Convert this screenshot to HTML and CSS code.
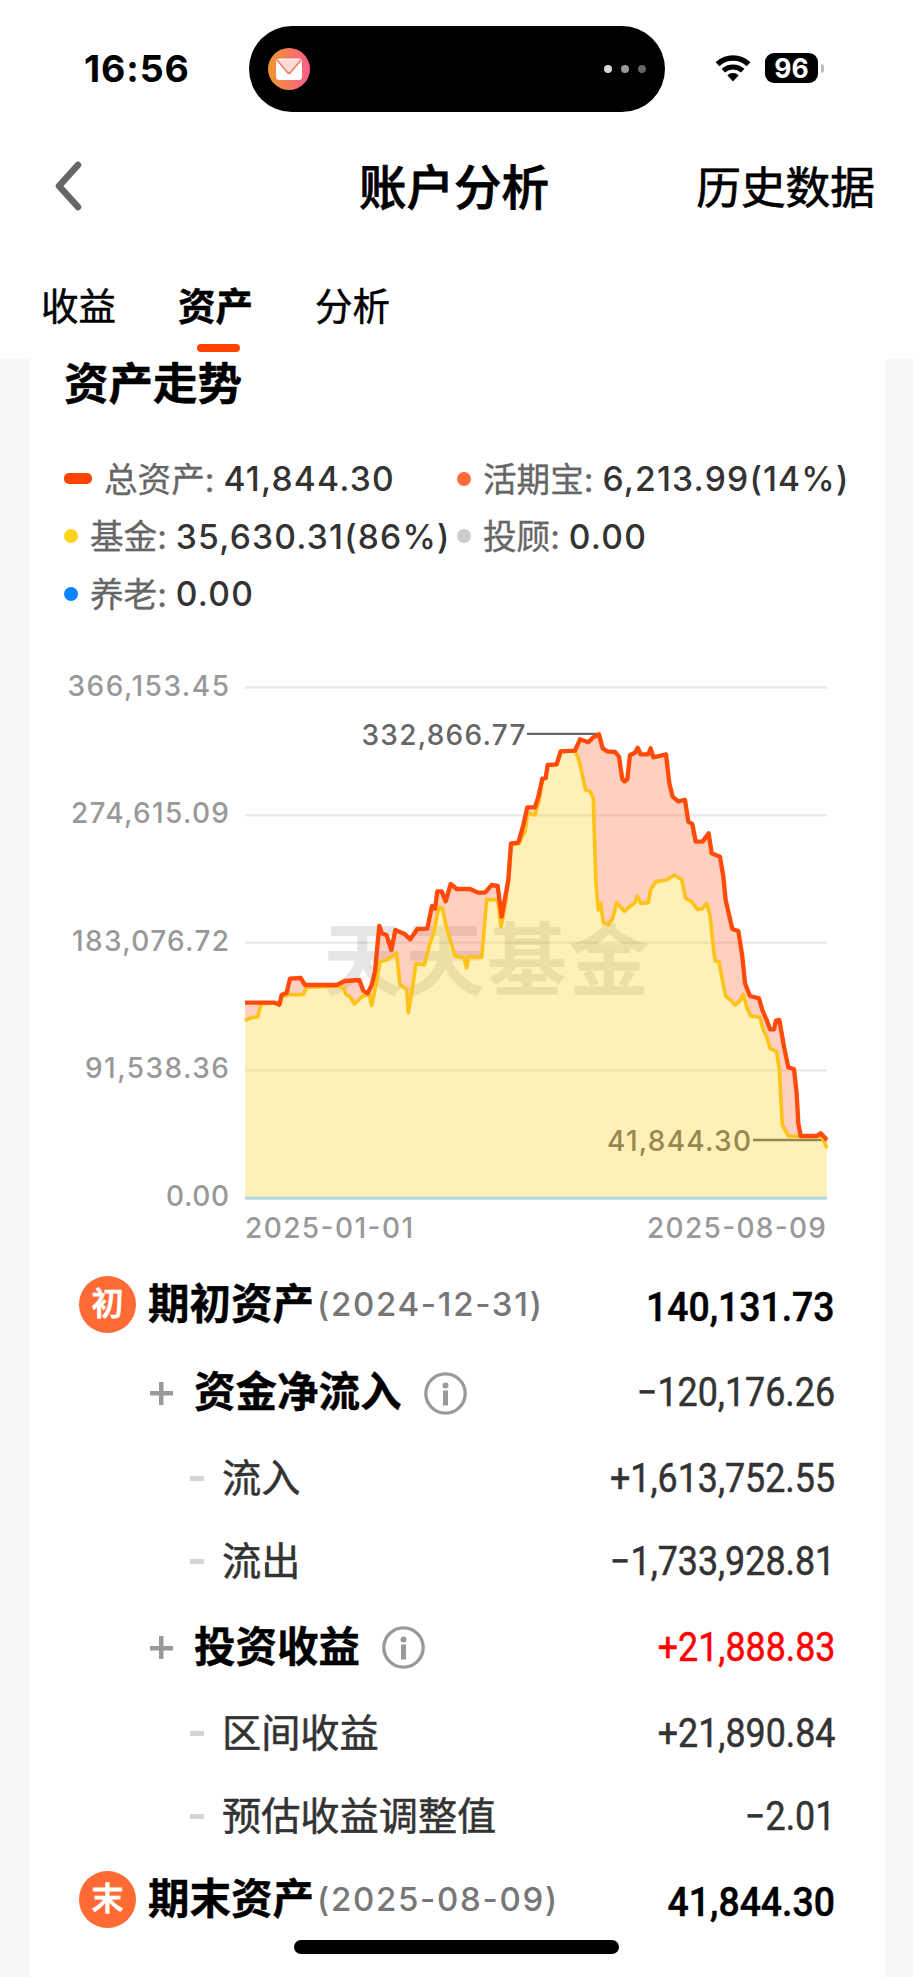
FILE: index.html
```html
<!DOCTYPE html>
<html lang="zh-CN">
<head>
<meta charset="utf-8">
<title>账户分析</title>
<link rel="stylesheet" href="styles.css">
</head>
<body>
<div class="screen">
  <header class="status">
    <span class="time">16:56</span>
    <div class="island">
      <svg class="mail" viewBox="0 0 42 42">
        <defs><linearGradient id="mailbg" x1="0" y1="0" x2="1" y2="0"><stop offset="0" stop-color="#f0962f"/><stop offset="1" stop-color="#fb5c8e"/></linearGradient></defs>
        <circle cx="21" cy="21" r="21" fill="url(#mailbg)"/>
        <rect x="8" y="10.500" width="26" height="21.500" rx="3.500" fill="#fff"/>
        <path d="M9.500 11.500H32.500L21 25Z" fill="#ffdcd8"/>
        <path d="M9 12L19.500 24.500Q21 26 22.500 24.500L33 12" fill="none" stroke="#f5806a" stroke-width="1.800"/>
      </svg>
      <div class="dots"><i></i><i></i><i></i></div>
    </div>
    <svg class="wifi" viewBox="0 0 36 28">
      <path d="M2.500 10.200A22.500 22.500 0 0 1 33.500 10.200" fill="none" stroke="#000" stroke-width="5.400"/>
      <path d="M8.300 16.700A14.500 14.500 0 0 1 27.700 16.700" fill="none" stroke="#000" stroke-width="5"/>
      <path d="M12.300 21.300A8.500 8.500 0 0 1 23.700 21.300L18 27.500Z"/>
    </svg>
    <div class="battery">96</div><i class="nub"></i>
  </header>

  <nav class="nav">
    <svg class="back" viewBox="0 0 28 50"><path d="M24 4L5 25L24 46" fill="none" stroke="#666" stroke-width="6.500" stroke-linecap="round" stroke-linejoin="round"/></svg>
    <h1 class="page-title">账户分析</h1>
    <a class="history">历史数据</a>
  </nav>

  <div class="tabs">
    <span class="tab">收益</span>
    <span class="tab active">资产</span>
    <span class="tab">分析</span>
  </div>

  <main class="backdrop">
    <section class="card">
      <h2 class="card-title">资产走势</h2>
      <div class="legend">
        <div class="key"><i class="mark bar"></i><span class="name">总资产:</span><b class="num">41,844.30</b></div>
        <div class="key"><i class="mark coral"></i><span class="name">活期宝:</span><b class="num">6,213.99(14%)</b></div>
        <div class="key"><i class="mark yellow"></i><span class="name">基金:</span><b class="num">35,630.31(86%)</b></div>
        <div class="key"><i class="mark gray"></i><span class="name">投顾:</span><b class="num">0.00</b></div>
        <div class="key"><i class="mark blue"></i><span class="name">养老:</span><b class="num">0.00</b></div>
      </div>

      <svg class="chart" viewBox="30 641 855 620">
        <g class="grid">
          <path d="M245 687.500H827" stroke-width="1.500"/><path d="M245 815.300H827"/><path d="M245 942.700H827"/><path d="M245 1070.300H827" stroke-width="1.500"/>
        </g>
        <g class="axis">
          <text x="67.500" y="695.500" textLength="161.500">366,153.45</text>
          <text x="71" y="823" textLength="158">274,615.09</text>
          <text x="72" y="950.500" textLength="157">183,076.72</text>
          <text x="85" y="1077.500" textLength="144">91,538.36</text>
          <text x="166" y="1206" textLength="63">0.00</text>
          <text x="245" y="1237.500" textLength="168">2025-01-01</text>
          <text x="647" y="1237.500" textLength="179">2025-08-09</text>
        </g>
        <text class="watermark" x="323" y="989" textLength="326">天天基金</text>
        <g class="callout">
          <text x="361.500" y="744.500" textLength="164">332,866.77</text>
          <path d="M527 733.800H597"/>
          <text x="607" y="1150.500" textLength="144">41,844.30</text>
          <path d="M753 1140H827"/>
        </g>
        <g id="series" transform="translate(230 700) scale(.33333)"></g>
        <path d="M245 1198.300H827" stroke="#b3d4e4" stroke-width="3"/>
      </svg>

      <div class="list">
        <div class="row head"><span class="badge">初</span><b class="label">期初资产</b><span class="date">(2024-12-31)</span><span class="amount strong">140,131.73</span></div>
        <div class="row item"><i class="plus"></i><b class="label">资金净流入</b><svg class="info" viewBox="0 0 43 43"><circle cx="21.500" cy="21.500" r="19.700"/><circle class="dot" cx="21.500" cy="13.500" r="3"/><path d="M21.500 18.500V33.500"/></svg><span class="amount">−120,176.26</span></div>
        <div class="row sub"><i class="dash"></i><span class="label">流入</span><span class="amount">+1,613,752.55</span></div>
        <div class="row sub"><i class="dash"></i><span class="label">流出</span><span class="amount">−1,733,928.81</span></div>
        <div class="row item"><i class="plus"></i><b class="label">投资收益</b><svg class="info" viewBox="0 0 43 43"><circle cx="21.500" cy="21.500" r="19.700"/><circle class="dot" cx="21.500" cy="13.500" r="3"/><path d="M21.500 18.500V33.500"/></svg><span class="amount red">+21,888.83</span></div>
        <div class="row sub"><i class="dash"></i><span class="label">区间收益</span><span class="amount">+21,890.84</span></div>
        <div class="row sub"><i class="dash"></i><span class="label">预估收益调整值</span><span class="amount">−2.01</span></div>
        <div class="row head"><span class="badge">末</span><b class="label">期末资产</b><span class="date">(2025-08-09)</span><span class="amount strong">41,844.30</span></div>
      </div>
    </section>
  </main>
  <div class="home"></div>
</div>
<script src="chart.js"></script>
</body>
</html>
```
FILE: styles.css
```css
* { box-sizing: border-box; }
body { margin: 0; background: #fff; font-family: Inter, "Noto Sans CJK SC", sans-serif; color: #000; }
i { font-style: normal; }
.screen { position: relative; width: 913px; height: 1977px; overflow: hidden; }

.status { display: flex; align-items: center; height: 138px; padding-left: 84px; }
.time { width: 165px; font-size: 37.500px; font-weight: 700; line-height: 40px; letter-spacing: .9px; }
.island { display: flex; align-items: center; justify-content: space-between; width: 416px; height: 86px; padding: 0 19px; border-radius: 43px; background: #000; }
.mail { width: 42px; height: 42px; }
.dots { display: flex; gap: 9px; }
.dots i { width: 8px; height: 8px; border-radius: 50%; background: #d8d8d8; }
.dots i + i { background: #999; }
.dots i + i + i { background: #666; }
.wifi { width: 36px; height: 28px; margin: -2px 0 0 50px; }
.battery { width: 53px; height: 30px; margin: -2px 0 0 14px; border-radius: 9px; background: #000; color: #fff; font-size: 26.500px; font-weight: 700; line-height: 30px; text-align: center; }
.nub { width: 3px; height: 9px; margin: -2px 0 0 3px; border-radius: 0 3px 3px 0; background: #bbb; }

.nav { display: flex; align-items: center; height: 97px; padding: 0 38px 0 54px; }
.back { width: 28px; height: 50px; margin-top: -1px; }
.page-title { margin: 3px 0 0 277px; font-size: 47.500px; font-weight: 500; line-height: 60px; -webkit-text-stroke: .8px #000; }
.history { margin: 2px 0 0 auto; font-size: 44.700px; line-height: 60px; -webkit-text-stroke: .7px #000; }

.tabs { display: flex; gap: 62px; height: 124px; padding: 44px 0 0 41px; }
.tab { position: relative; width: 75px; font-size: 37.500px; line-height: 56px; -webkit-text-stroke: .5px #000; }
.tab.active { font-weight: 700; }
.tab.active::after { content: ""; position: absolute; left: 19px; top: 65px; width: 43px; height: 8px; border-radius: 4px; background: #ff4400; }

.backdrop { height: 1618px; padding: 0 28px 0 30px; background: #f7f7f7; }
.card { height: 1618px; background: #fff; }
.card-title { margin: 0; height: 91px; padding-left: 34px; font-size: 44.500px; font-weight: 700; line-height: 51px; -webkit-text-stroke: .5px #000; }

.legend { display: grid; grid-template-columns: 393px 1fr; grid-auto-rows: 57.500px; height: 191px; padding-left: 34px; }
.key { display: flex; align-items: center; white-space: nowrap; font-size: 33.600px; }
.mark { width: 14px; height: 14px; margin-right: 12px; border-radius: 50%; }
.bar { width: 28px; height: 11px; border-radius: 5px; background: #ff4400; }
.coral { background: #ff6a3c; }
.yellow { background: #fdd41c; }
.gray { background: #ccc; }
.blue { background: #0a84ff; }
.name { color: #666; margin-top: -3px; -webkit-text-stroke: .35px #666; }
.num { margin-left: 9px; color: #333; font-weight: 500; letter-spacing: 1.200px; }

.chart { display: block; width: 855px; height: 620px; font-family: Inter, sans-serif; }
.grid path { stroke: #e9e9e9; stroke-width: 2.300px; }
.axis text { fill: #999; font-size: 28px; font-weight: 550; }
.callout text { fill: #666; font-size: 28px; font-weight: 550; }
.callout path { stroke: #666; stroke-width: 2.300px; }
.watermark { fill: #000; fill-opacity: .1; font: 700 80px "Noto Sans CJK SC", sans-serif; }

.list { padding: 0 50px 0 49px; }
.row { display: flex; align-items: center; white-space: nowrap; }
.head { height: 86px; }
.item { height: 88.500px; padding-left: 71px; }
.sub { height: 83px; padding-left: 111px; }
.badge { width: 57px; height: 57px; margin: 1px 12px 0 0; border-radius: 50%; background: #ff6a35; color: #fff; font-size: 32px; font-weight: 500; line-height: 56px; text-align: center; -webkit-text-stroke: .8px #fff; }
.label { margin-top: 2px; font-size: 41.500px; line-height: 60px; }
b.label { -webkit-text-stroke: .4px #000; }
.head .label { margin-top: 0; }
.item .label { position: relative; left: -1px; }
.sub .label { color: #333; font-size: 39.200px; -webkit-text-stroke: .5px #333; }
.date { margin: -1px 0 0 3px; color: #777; font-size: 33px; font-weight: 500; letter-spacing: 1.700px; }
.amount { margin: 3px 0 0 auto; font-family: Roboto, sans-serif; font-size: 39.800px; font-weight: 450; color: #333; transform: scaleX(.9); transform-origin: right; -webkit-text-stroke: .5px currentColor; }
.strong { margin-top: 5px; color: #000; font-size: 41.500px; font-weight: 500; }
.red { color: #f00; }
.plus { width: 23px; height: 23px; margin: 4px 22px 0 0; background: linear-gradient(#999, #999) center / 23px 4.500px no-repeat, linear-gradient(#999, #999) center / 4.500px 23px no-repeat; }
.dash { width: 14px; height: 5px; margin: 3px 18px 0 0; background: #d5d5d5; }
.info { width: 43px; height: 43px; margin: 4px 0 0 21px; fill: none; stroke: #999; stroke-width: 3.300px; }
.info path { stroke-width: 5px; }
.info .dot { fill: #999; stroke: none; }

.home { position: absolute; left: 294px; top: 1940px; width: 325px; height: 14px; border-radius: 7px; background: #000; }
```
FILE: chart.js
```js
// Trend points, three units per pixel.
const rise = "843,430 865,428 880,375 892,322 915,322 925,290 937,236 947,234 953,195 980,193 992,154 1035,152";
const total = "45,908 135,908 148,914 155,885 170,878 180,836 212,834 225,855 320,855 345,843 388,840 400,872 413,880 425,855 435,815 440,760 448,678 456,700 470,706 484,750 496,690 525,703 541,718 562,687 592,686 606,618 615,626 622,574 635,574 647,604 662,552 680,567 720,567 745,578 765,578 785,555 803,558 815,650 835,540 " + rise +
  " 1050,118 1075,127 1090,112 1107,103 1118,145 1132,154 1155,156 1167,170 1177,238 1183,244 1192,238 1200,165 1215,158 1223,143 1232,163 1255,163 1262,145 1270,172 1308,163 1318,250 1328,290 1345,304 1365,300 1375,365 1387,372 1397,425 1418,424 1436,400 1445,460 1470,470 1480,530 1487,600 1507,687 1525,693 1537,770 1545,850 1560,888 1587,895 1597,930 1610,960 1620,988 1632,988 1638,962 1648,960 1662,1040 1675,1102 1692,1107 1700,1180 1705,1270 1712,1308 1760,1308 1772,1300 1791,1320";
const fund = "45,962 60,954 83,950 93,912 135,908 148,914 155,890 175,884 220,884 230,862 320,858 340,862 348,884 360,890 373,912 398,888 418,884 425,916 437,860 450,785 470,780 492,765 500,760 510,855 530,868 535,938 545,880 558,790 583,795 600,730 612,695 622,640 630,622 637,624 650,685 662,725 675,768 702,774 710,804 716,770 755,772 770,598 803,600 813,680 825,620 835,540 843,435 865,432 885,395 893,340 915,345 928,300 937,240 947,236 953,195 980,193 992,154 1035,152" +
  " 1045,175 1055,215 1067,270 1080,274 1090,295 1093,400 1098,550 1105,630 1112,610 1120,668 1135,674 1148,655 1160,608 1183,634 1205,615 1215,608 1222,588 1232,610 1255,608 1262,568 1278,545 1310,540 1332,525 1355,538 1367,595 1385,605 1402,628 1417,626 1430,610 1440,645 1448,720 1455,782 1467,785 1475,830 1487,888 1502,900 1515,915 1528,905 1540,883 1550,920 1562,948 1590,952 1600,990 1610,1010 1620,1045 1640,1055 1648,1110 1657,1275 1675,1308 1775,1310 1791,1345";
const line = p => "M" + p.split(" ").join("L");
const area = p => line(p) + "L1791,1495L45,1495Z";
document.getElementById("series").innerHTML =
  `<path d="${area(total)}${area(fund)}" fill="#ff6a3c" fill-opacity=".32" fill-rule="evenodd"/>
   <path d="${area(fund)}" fill="#ffd01f" fill-opacity=".32"/>
   <g fill="none" stroke-linejoin="round">
     <path d="${line(fund)}" stroke="#fdc31b" stroke-width="11"/>
     <path d="${line(total)}" stroke="#ff4a0a" stroke-width="13"/>
   </g>`;
```
